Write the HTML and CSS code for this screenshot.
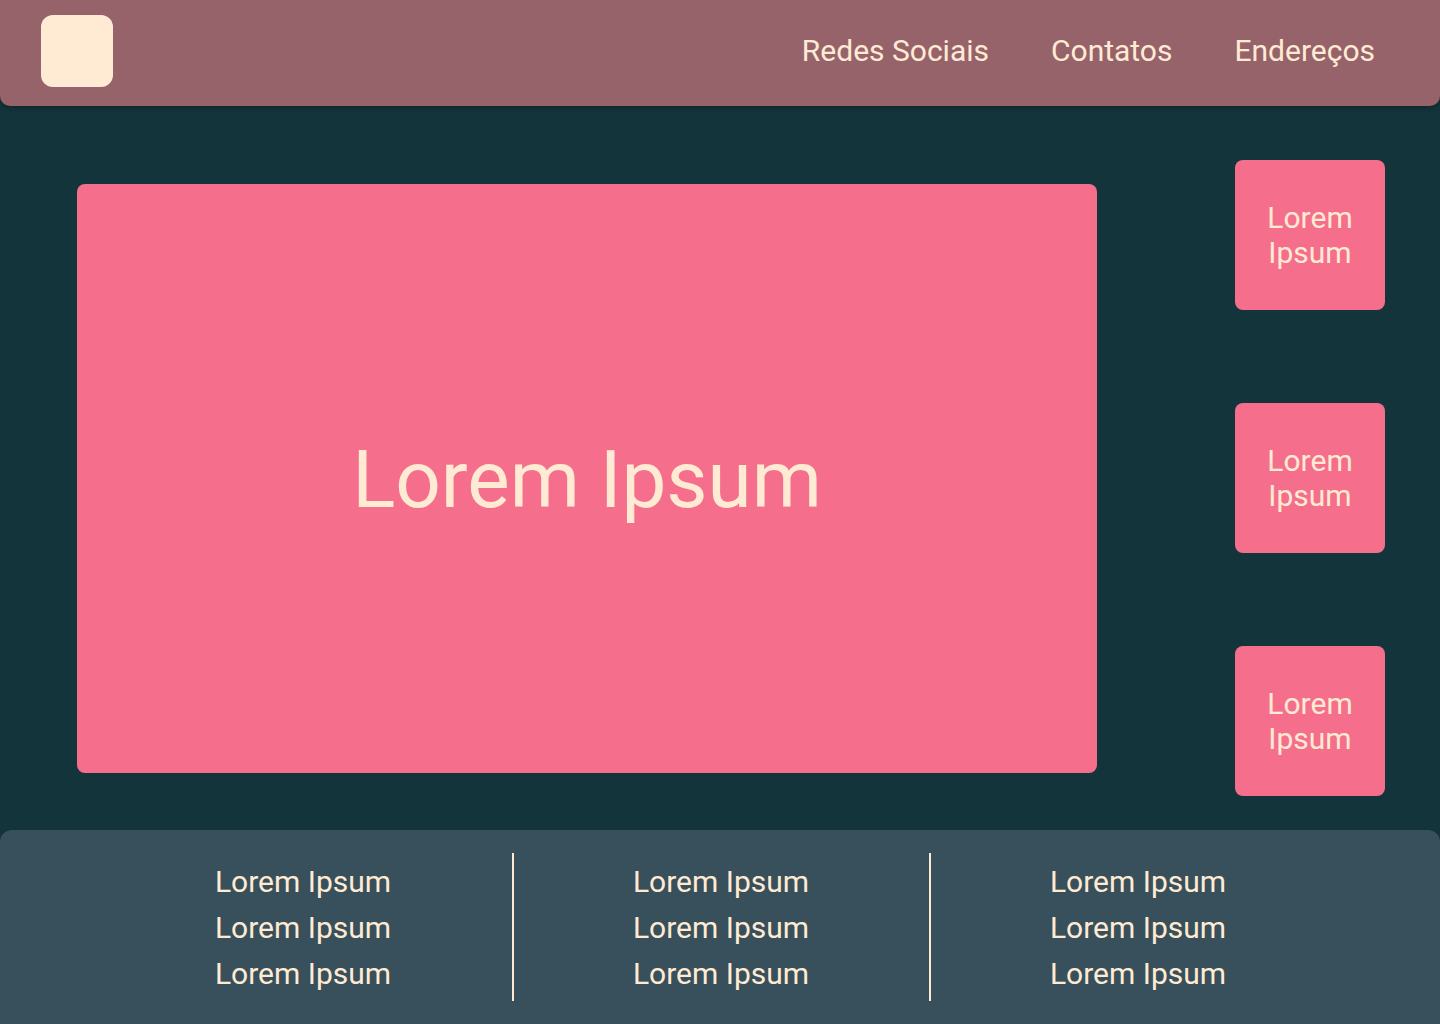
FILE: index.html
```html
<!DOCTYPE html>
<html lang="pt">
<head>
<meta charset="utf-8">
<title>Layout</title>
<link rel="stylesheet" href="styles.css">
</head>
<body>
<header class="header">
  <div class="logo"></div>
  <nav class="nav">
    <a href="#">Redes Sociais</a>
    <a href="#">Contatos</a>
    <a href="#">Endereços</a>
  </nav>
</header>
<main class="main">
  <section class="hero">Lorem Ipsum</section>
  <aside class="side">
    <div class="tile">Lorem<br>Ipsum</div>
    <div class="tile">Lorem<br>Ipsum</div>
    <div class="tile">Lorem<br>Ipsum</div>
  </aside>
</main>
<footer class="footer">
  <div class="col">
    <p>Lorem Ipsum</p>
    <p>Lorem Ipsum</p>
    <p>Lorem Ipsum</p>
  </div>
  <div class="col">
    <p>Lorem Ipsum</p>
    <p>Lorem Ipsum</p>
    <p>Lorem Ipsum</p>
  </div>
  <div class="col">
    <p>Lorem Ipsum</p>
    <p>Lorem Ipsum</p>
    <p>Lorem Ipsum</p>
  </div>
</footer>
</body>
</html>
```
FILE: styles.css
```css
* { box-sizing: border-box; }
html, body {
  margin: 0;
  padding: 0;
}
body {
  width: 1440px;
  height: 1024px;
  background: #12343a;
  font-family: Roboto, "Liberation Sans", sans-serif;
  color: #ffebd3;
  display: flex;
  flex-direction: column;
  overflow: hidden;
}
.header {
  height: 106px;
  background: #97636b;
  border-radius: 0 0 10px 10px;
  display: flex;
  align-items: center;
  justify-content: space-between;
  padding: 0 65px 4px 41px;
  box-shadow: 0 2px 4px rgba(0,0,0,0.25);
  position: relative;
  z-index: 1;
}
.logo {
  width: 72px;
  height: 72px;
  background: #ffebd3;
  border-radius: 12px;
}
.nav {
  display: flex;
  gap: 62px;
}
.nav a {
  color: #ffebd3;
  text-decoration: none;
  font-size: 30px;
  line-height: 36px;
}
.main {
  flex: 1;
  display: flex;
  align-items: flex-start;
  padding: 54px 55px 0 77px;
  gap: 138px;
}
.hero {
  width: 1020px;
  height: 589px;
  margin-top: 24px;
  background: #f56f8d;
  border-radius: 8px;
  display: flex;
  align-items: center;
  justify-content: center;
  font-size: 80px;
  line-height: 1;
  padding-top: 2px;
}
.side {
  display: flex;
  flex-direction: column;
  gap: 93px;
}
.tile {
  width: 150px;
  height: 150px;
  background: #f56f8d;
  border-radius: 8px;
  display: flex;
  align-items: center;
  justify-content: center;
  text-align: center;
  font-size: 30px;
  line-height: 35px;
}
.footer {
  height: 194px;
  flex-shrink: 0;
  background: #38505c;
  border-radius: 12px 12px 0 0;
  display: flex;
  justify-content: center;
  padding: 23px 0;
}
.col {
  width: 417px;
  display: flex;
  flex-direction: column;
  align-items: center;
  justify-content: center;
  padding-top: 1px;
}
.col + .col {
  border-left: 2px solid #ffebd3;
}
.col p {
  margin: 0;
  font-size: 30px;
  line-height: 46px;
}
```
